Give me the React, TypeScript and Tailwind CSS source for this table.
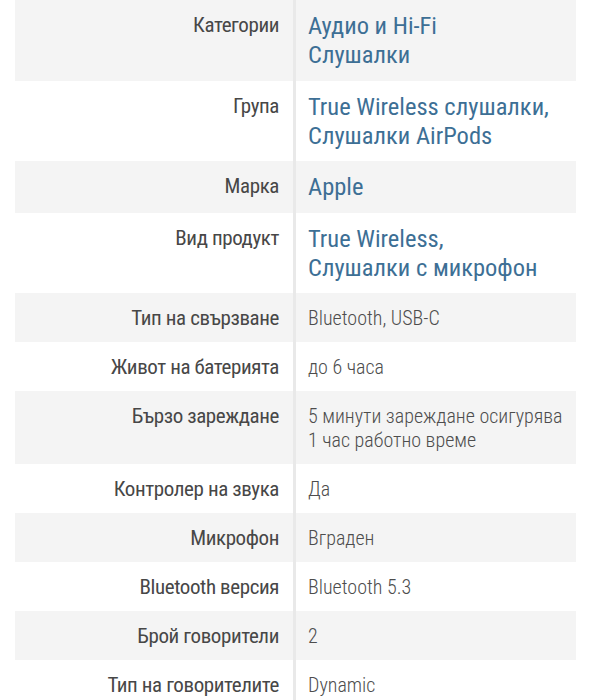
import React from "react";

type Row = { label: string; value: string[]; link?: boolean };

const rows: Row[] = [
  { label: "Категории", value: ["Аудио и Hi-Fi", "Слушалки"], link: true },
  { label: "Група", value: ["True Wireless слушалки,", "Слушалки AirPods"], link: true },
  { label: "Марка", value: ["Apple"], link: true },
  { label: "Вид продукт", value: ["True Wireless,", "Слушалки с микрофон"], link: true },
  { label: "Тип на свързване", value: ["Bluetooth, USB-C"] },
  { label: "Живот на батерията", value: ["до 6 часа"] },
  { label: "Бързо зареждане", value: ["5 минути зареждане осигурява", "1 час работно време"] },
  { label: "Контролер на звука", value: ["Да"] },
  { label: "Микрофон", value: ["Вграден"] },
  { label: "Bluetooth версия", value: ["Bluetooth 5.3"] },
  { label: "Брой говорители", value: ["2"] },
  { label: "Тип на говорителите", value: ["Dynamic"] },
];

export default function App() {
  return (
    <div
      className="w-[591px] h-[700px] overflow-hidden bg-white"
      style={{ fontFamily: '"Roboto Condensed", "Liberation Sans Narrow", Roboto, sans-serif' }}
    >
      <div className="mx-[15px] flex flex-col">
        {rows.map((r, i) => (
          <div
            key={i}
            className={`flex ${i % 2 === 0 ? "bg-[#f4f4f4]" : "bg-white"}`}
          >
            <div className="w-[278px] shrink-0 text-right pr-[14px] pt-[13px] text-[21px] leading-[24px] tracking-[-0.4px] text-[#474747]">
              {r.label}
            </div>
            <div className="w-[3px] shrink-0 bg-[#e9e9e9]" />
            <div className="flex-1 pl-[12px]">
              {r.link ? (
                <div className="pt-[11px] pb-[11.5px] text-[24.5px] leading-[29px] text-[#3d6f95]">
                  {r.value.map((v, j) => (
                    <div key={j}>{v}</div>
                  ))}
                </div>
              ) : (
                <div className="py-[12.5px] text-[20px] leading-[24px] font-light text-[#4d4d4d]">
                  {r.value.map((v, j) => (
                    <div key={j}>{v}</div>
                  ))}
                </div>
              )}
            </div>
          </div>
        ))}
      </div>
    </div>
  );
}
